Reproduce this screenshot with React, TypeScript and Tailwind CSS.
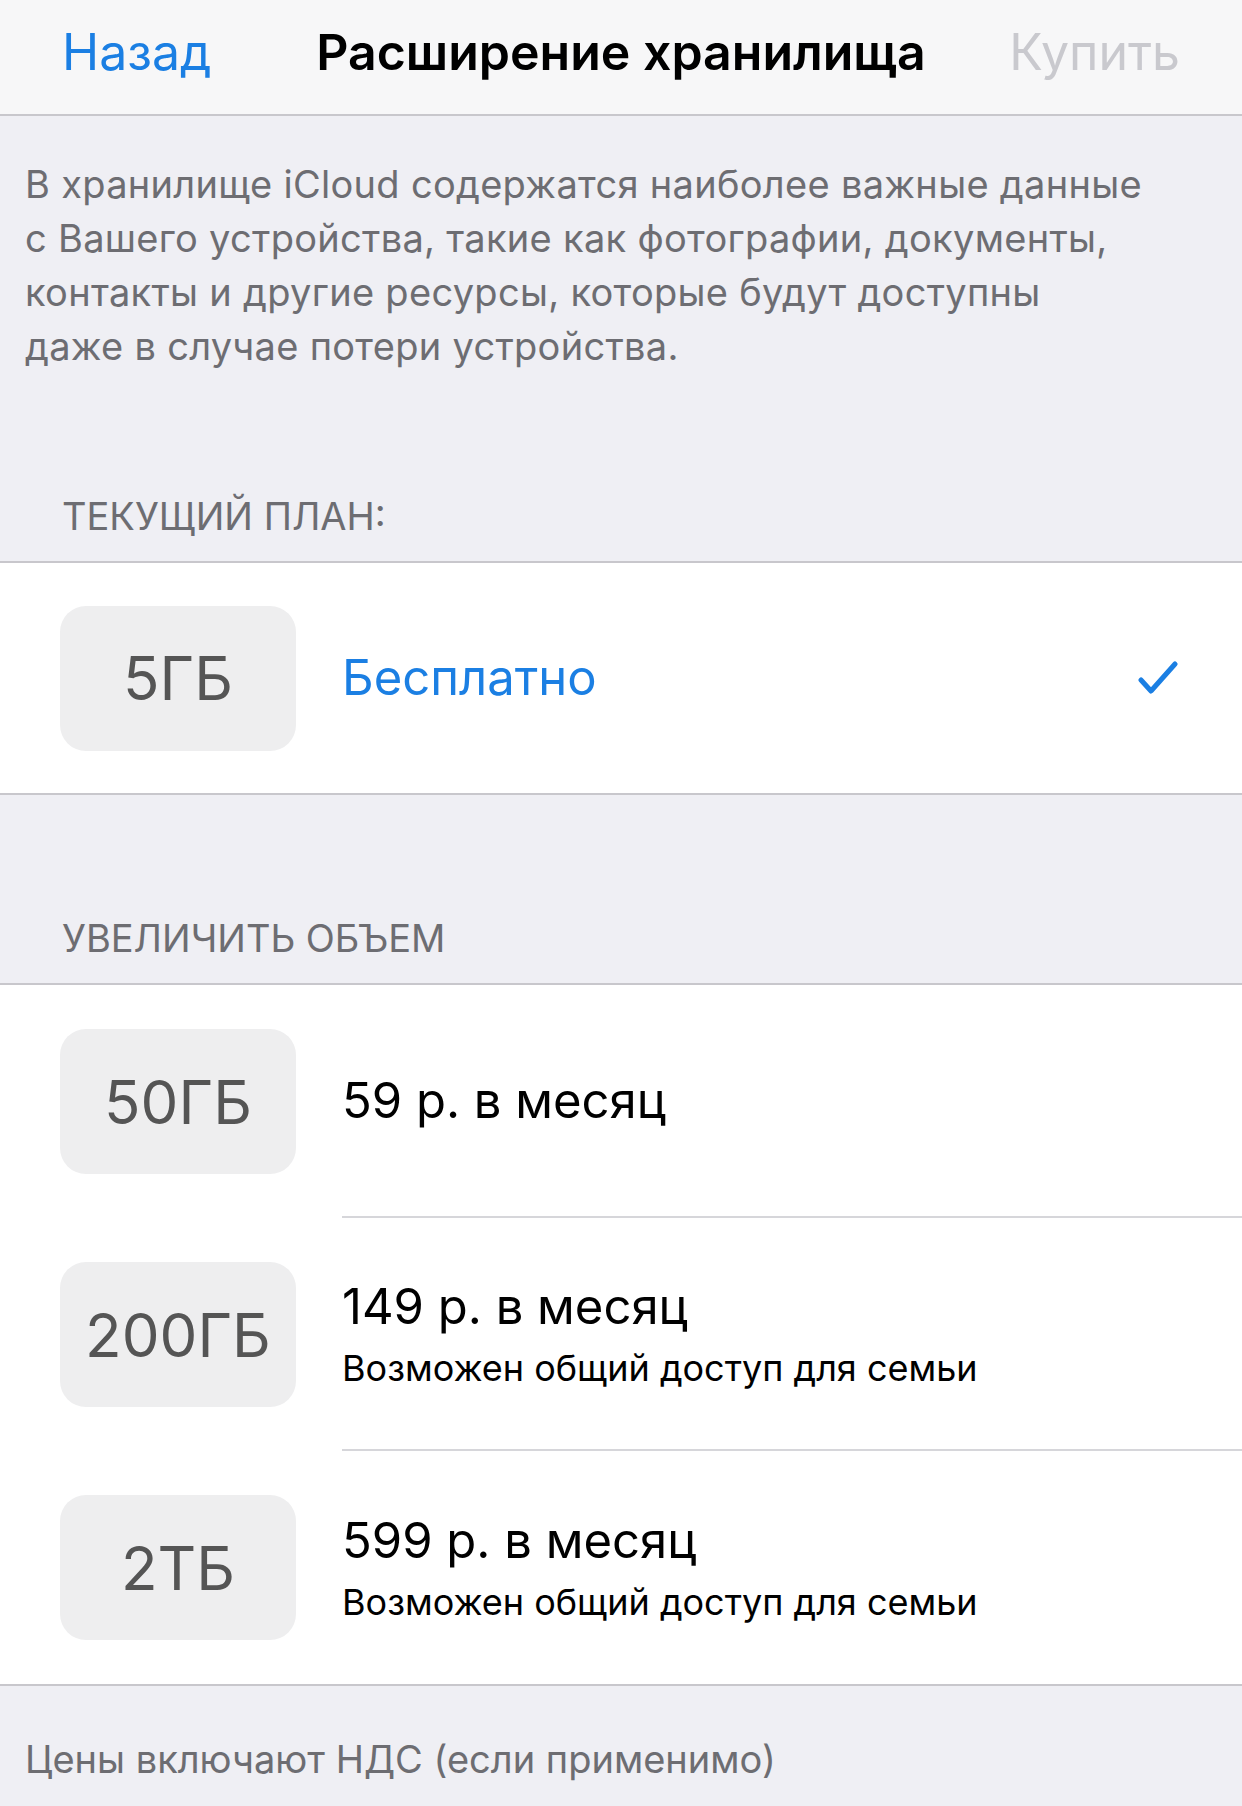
const font = { fontFamily: "Inter, 'Liberation Sans', sans-serif" };

type Plan = { size: string; price: string; note?: string };

const plans: Plan[] = [
  { size: "50ГБ", price: "59 р. в месяц" },
  { size: "200ГБ", price: "149 р. в месяц", note: "Возможен общий доступ для семьи" },
  { size: "2ТБ", price: "599 р. в месяц", note: "Возможен общий доступ для семьи" },
];

function SizeBox({ label }: { label: string }) {
  return (
    <div className="flex h-[145px] w-[236px] shrink-0 items-center justify-center rounded-[26px] bg-[#eeeeef] text-[60px] text-[#555555]">
      {label}
    </div>
  );
}

function Check() {
  return (
    <svg width="40" height="34" viewBox="0 0 40 34" className="shrink-0">
      <polyline
        points="3,19 13,30 37,3"
        fill="none"
        stroke="#1b7fe3"
        strokeWidth="5"
        strokeLinecap="round"
        strokeLinejoin="round"
      />
    </svg>
  );
}

export default function App() {
  return (
    <div className="flex min-h-[1806px] w-[1242px] flex-col bg-[#efeff4]" style={font}>
      {/* Nav bar */}
      <div className="grid h-[116px] grid-cols-[1fr_auto_1fr] items-center border-b-2 border-[#c8c7cc] bg-[#f7f7f8] px-[62px] pb-[10px]">
        <span className="text-[50px] text-[#1b7fe3]">Назад</span>
        <span className="text-[50px] font-semibold text-black">Расширение хранилища</span>
        <span className="justify-self-end text-[50px] text-[#c9c9ce]">Купить</span>
      </div>

      {/* Description */}
      <p className="px-[25px] pt-[41px] text-[38px] leading-[54px] tracking-[0.3px] text-[#6d6d72]">
        В хранилище iCloud содержатся наиболее важные данные
        <br />с Вашего устройства, такие как фотографии, документы,
        <br />
        контакты и другие ресурсы, которые будут доступны
        <br />
        даже в случае потери устройства.
      </p>

      <div className="flex h-[188px] items-end px-[62px] pb-[23px] text-[38px] leading-[44px] text-[#6d6d72]">
        ТЕКУЩИЙ ПЛАН:
      </div>

      {/* Current plan */}
      <div className="flex h-[234px] items-center border-y-2 border-[#c8c7cc] bg-white pl-[60px] pr-[64px]">
        <SizeBox label="5ГБ" />
        <span className="ml-[46px] flex-1 text-[49px] text-[#1b7fe3]">Бесплатно</span>
        <Check />
      </div>

      <div className="flex h-[188px] items-end px-[62px] pb-[23px] text-[38px] leading-[44px] text-[#6d6d72]">
        УВЕЛИЧИТЬ ОБЪЕМ
      </div>

      {/* Upgrade options */}
      <div className="border-y-2 border-[#c8c7cc] bg-white">
        {plans.map((p, i) => (
          <div key={p.size} className="flex h-[233px] items-center pl-[60px]">
            <SizeBox label={p.size} />
            <div
              className={`ml-[46px] flex h-full flex-1 flex-col justify-center ${
                i < plans.length - 1 ? "border-b-2 border-[#d6d6da]" : ""
              }`}
            >
              <span className="text-[49px] leading-[60px] text-black">{p.price}</span>
              {p.note && (
                <span className="mt-[9px] text-[36px] leading-[44px] text-black">{p.note}</span>
              )}
            </div>
          </div>
        ))}
      </div>

      {/* Footer */}
      <p className="px-[25px] pt-[51px] text-[38px] leading-[44px] text-[#6d6d72]">
        Цены включают НДС (если применимо)
      </p>
    </div>
  );
}
